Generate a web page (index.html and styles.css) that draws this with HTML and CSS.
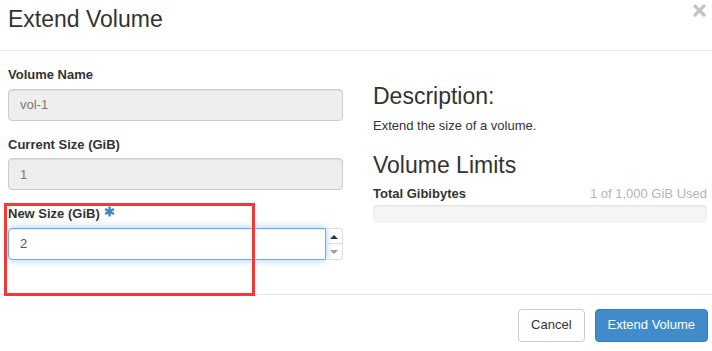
FILE: index.html
```html
<!DOCTYPE html>
<html lang="en">
<head>
    <meta charset="UTF-8">
    <meta name="viewport" content="width=device-width, initial-scale=1.0">
    <title>Extend Volume</title>
    <link rel="stylesheet" href="styles.css">
</head>
<body>
    <div class="modal">
        <div class="modal-header">
            <h3 class="modal-title">Extend Volume</h3>
            <svg class="close" width="13" height="13" viewBox="0 0 13 13">
                <path d="M2 2 L11 11 M11 2 L2 11" stroke="#c4c4c4" stroke-width="3.2" stroke-linecap="round"/>
            </svg>
        </div>

        <div class="modal-body">
            <div class="left">
                <div class="form-group">
                    <label>Volume Name</label>
                    <input type="text" class="form-control" value="vol-1" readonly>
                </div>
                <div class="form-group">
                    <label>Current Size (GiB)</label>
                    <input type="text" class="form-control" value="1" readonly>
                </div>
                <div class="form-group">
                    <label>New Size (GiB)
                        <svg class="required" width="11" height="11" viewBox="0 0 12 12">
                            <path d="M6 0.5 V11.5 M1.2 3.2 L10.8 8.8 M10.8 3.2 L1.2 8.8" stroke="#3a87c8" stroke-width="2.6"/>
                        </svg>
                    </label>
                    <div class="spin-row">
                        <input type="text" class="form-control focused" value="2">
                        <div class="spinner">
                            <span class="spin-up"></span>
                            <span class="spin-down"></span>
                        </div>
                    </div>
                </div>
            </div>

            <div class="right">
                <h3>Description:</h3>
                <p>Extend the size of a volume.</p>
                <h3 class="limits">Volume Limits</h3>
                <div class="quota-head">
                    <strong>Total Gibibytes</strong>
                    <span class="quota-used">1 of 1,000 GiB Used</span>
                </div>
                <div class="progress"></div>
            </div>
        </div>

        <div class="modal-footer">
            <button class="btn btn-default">Cancel</button>
            <button class="btn btn-primary">Extend Volume</button>
        </div>

        <!-- highlight box drawn over the form -->
        <div class="highlight"></div>
    </div>
</body>
</html>
```

FILE: styles.css
```css
body {
    font-family: 'Liberation Sans', Arial, sans-serif;
    font-size: 13px;
    line-height: 1.43;
    color: #333;
    background: #fff;
    margin: 0;
}
.modal {
    position: relative;
    width: 712px;
    height: 351px;
    overflow: hidden;
}
.modal-header {
    box-sizing: border-box;
    height: 51px;
    padding: 7px 6px 0 8px;
    border-bottom: 1px solid #e5e5e5;
    display: flex;
    justify-content: space-between;
    align-items: flex-start;
}
.modal-title {
    margin: 0;
    font-size: 23px;
    font-weight: normal;
    line-height: 1.1;
}
.close {
    margin-top: -3px;
}
.modal-body {
    display: grid;
    grid-template-columns: 335px 334px;
    column-gap: 30px;
    padding: 15px 5px 0 8px;
    height: 228px;
    border-bottom: 1px solid #e5e5e5;
}
.form-group {
    margin-bottom: 15px;
}
label {
    display: block;
    font-weight: bold;
    margin-bottom: 4px;
}
.required {
    vertical-align: 1px;
    margin-left: 1px;
}
.form-control {
    display: block;
    box-sizing: border-box;
    width: 100%;
    height: 32px;
    padding: 6px 11px;
    font-family: inherit;
    font-size: 13px;
    color: #555;
    background: #fff;
    border: 1px solid #ccc;
    border-radius: 4px;
    box-shadow: inset 0 1px 1px rgba(0, 0, 0, 0.075);
}
.form-control[readonly] {
    background: #eee;
    color: #777;
}
.spin-row {
    display: flex;
    margin-top: 1px;
}
.focused {
    flex: 1;
    border-color: #66afe9;
    border-radius: 4px 0 0 4px;
    box-shadow: inset 0 1px 1px rgba(0, 0, 0, 0.075), 0 0 8px rgba(102, 175, 233, 0.6);
}
.spinner {
    width: 17px;
    height: 32px;
    box-sizing: border-box;
    border: 1px solid #ddd;
    border-left: none;
    border-radius: 0 4px 4px 0;
    display: flex;
    flex-direction: column;
}
.spin-up, .spin-down {
    flex: 1;
    position: relative;
}
.spin-up {
    border-bottom: 1px solid #ddd;
}
.spin-up::after, .spin-down::after {
    content: '';
    position: absolute;
    left: 4px;
    top: 6px;
    border-left: 4px solid transparent;
    border-right: 4px solid transparent;
}
.spin-up::after {
    border-bottom: 4px solid #333;
}
.spin-down::after {
    border-top: 4px solid #999;
}
.right h3 {
    font-size: 23px;
    font-weight: normal;
    line-height: 1.1;
    margin: 18px 0 8px;
}
.right p {
    margin: 0;
}
.right h3.limits {
    margin: 17px 0 7px;
}
.quota-head {
    display: flex;
    justify-content: space-between;
}
.quota-used {
    color: #b5b5b5;
}
.progress {
    height: 18px;
    margin-top: 1px;
    background: #f5f5f5;
    border-radius: 4px;
    box-shadow: inset 0 1px 2px rgba(0, 0, 0, 0.1);
}
.modal-footer {
    display: flex;
    justify-content: flex-end;
    gap: 10px;
    padding: 14px 4px 0 0;
}
.btn {
    font-family: inherit;
    font-size: 13px;
    line-height: 1.43;
    padding: 6px 12px;
    border: 1px solid #ccc;
    border-radius: 4px;
    cursor: pointer;
}
.btn-default {
    background: #fff;
    color: #333;
}
.btn-primary {
    background: #428bca;
    border-color: #357ebd;
    color: #fff;
}
.highlight {
    position: absolute;
    left: 4px;
    top: 203px;
    width: 245px;
    height: 87px;
    border: 3px solid #ef3a3a;
}
```
